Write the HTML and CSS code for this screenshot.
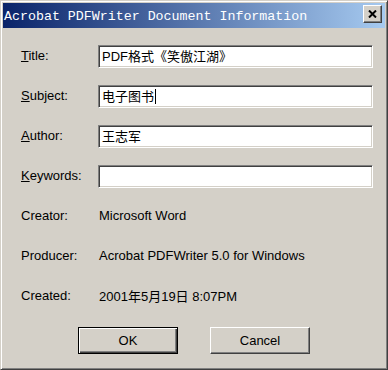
FILE: index.html
```html
<!DOCTYPE html>
<html lang="en">
<head>
    <meta charset="UTF-8">
    <meta name="viewport" content="width=device-width, initial-scale=1.0">
    <title>Acrobat PDFWriter Document Information</title>
    <link rel="stylesheet" href="styles.css">
</head>
<body>
    <div class="window">
        <div class="title-bar">
            <span class="title-text">Acrobat PDFWriter Document Information</span>
            <div class="close-btn">
                <svg width="9" height="8" viewBox="0 0 9 8">
                    <path d="M1 0.5 L8 7.5 M8 0.5 L1 7.5" stroke="#000" stroke-width="2" fill="none"/>
                </svg>
            </div>
        </div>

        <div class="content">
            <div class="row">
                <div class="label"><u>T</u>itle:</div>
                <div class="field">PDF格式《笑傲江湖》</div>
            </div>
            <div class="row">
                <div class="label"><u>S</u>ubject:</div>
                <div class="field">电子图书<span class="caret"></span></div>
            </div>
            <div class="row">
                <div class="label"><u>A</u>uthor:</div>
                <div class="field">王志军</div>
            </div>
            <div class="row">
                <div class="label"><u>K</u>eywords:</div>
                <div class="field"></div>
            </div>
            <div class="row">
                <div class="label">Creator:</div>
                <div class="value">Microsoft Word</div>
            </div>
            <div class="row">
                <div class="label">Producer:</div>
                <div class="value">Acrobat PDFWriter 5.0 for Windows</div>
            </div>
            <div class="row">
                <div class="label">Created:</div>
                <div class="value">2001年5月19日 8:07PM</div>
            </div>

            <div class="buttons">
                <div class="btn btn-default">OK</div>
                <div class="btn">Cancel</div>
            </div>
        </div>
    </div>
</body>
</html>
```

FILE: styles.css
```css
body {
    margin: 0;
    font-family: "Liberation Sans", "Noto Sans CJK SC", sans-serif;
    font-size: 13px;
    color: #000;
    background-color: #d4d0c8;
}
.window {
    width: 388px;
    height: 370px;
    box-sizing: border-box;
    background-color: #d4d0c8;
    border: 1px solid;
    border-color: #d4d0c8 #404040 #404040 #d4d0c8;
    box-shadow: inset 1px 1px #fff, inset -1px -1px #808080;
    padding: 2px;
    display: flex;
    flex-direction: column;
}
.title-bar {
    height: 25px;
    box-sizing: border-box;
    padding: 2px 3px 0 1px;
    display: flex;
    align-items: flex-start;
    justify-content: space-between;
    background: linear-gradient(to right, #0a246a, #a6caf0);
}
.title-text {
    font-family: "Liberation Mono", monospace;
    font-size: 13.3px;
    line-height: 23px;
    color: #fff;
    white-space: nowrap;
}
.close-btn {
    width: 19px;
    height: 18px;
    box-sizing: border-box;
    background-color: #d4d0c8;
    border: 1px solid;
    border-color: #fff #404040 #404040 #fff;
    box-shadow: inset -1px -1px #808080;
    display: flex;
    align-items: center;
    justify-content: center;
}
.content {
    padding: 7px 12px 0 18px;
}
.row {
    height: 40px;
    display: flex;
    align-items: center;
}
.label {
    width: 77px;
    flex-shrink: 0;
    white-space: nowrap;
}
.field {
    flex: 1;
    height: 23px;
    margin-top: 3px;
    box-sizing: border-box;
    background-color: #fff;
    border: 1px solid;
    border-color: #808080 #fff #fff #808080;
    box-shadow: inset 1px 1px #404040, inset -1px -1px #d4d0c8;
    padding: 1px 3px 1px 3px;
    line-height: 19px;
    white-space: nowrap;
    overflow: hidden;
}
.caret {
    display: inline-block;
    width: 0;
    height: 15px;
    border-left: 1px solid #000;
    margin-left: 1px;
    vertical-align: -3px;
}
.value {
    padding-left: 1px;
    white-space: nowrap;
}
.buttons {
    display: flex;
    justify-content: center;
    gap: 32px;
    margin-top: 12px;
    margin-left: -15px;
    margin-right: -9px;
}
.btn {
    width: 100px;
    height: 27px;
    box-sizing: border-box;
    border: 1px solid;
    border-color: #fff #404040 #404040 #fff;
    box-shadow: inset -1px -1px #808080;
    display: flex;
    align-items: center;
    justify-content: center;
}
.btn-default {
    border-color: #000;
    box-shadow: inset 1px 1px #fff, inset -1px -1px #404040, inset -2px -2px #808080;
}
```
